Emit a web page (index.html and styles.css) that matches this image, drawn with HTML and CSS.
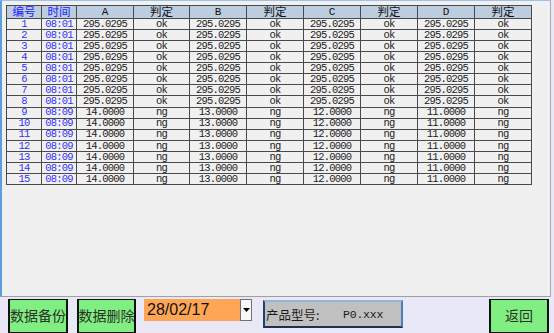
FILE: index.html
```html
<!DOCTYPE html>
<html lang="zh">
<head>
<meta charset="utf-8">
<title>数据记录</title>
<link rel="stylesheet" href="styles.css">
</head>
<body>
<div class="screen">
  <div class="panel">
    <div class="grid">
      <div class="h blue">编号</div><div class="h blue">时间</div><div class="h lat">A</div><div class="h">判定</div><div class="h lat">B</div><div class="h">判定</div><div class="h lat">C</div><div class="h">判定</div><div class="h lat">D</div><div class="h">判定</div>
      <div class="c b">1</div><div class="c b">08:01</div><div class="c">295.0295</div><div class="c">ok</div><div class="c">295.0295</div><div class="c">ok</div><div class="c">295.0295</div><div class="c">ok</div><div class="c">295.0295</div><div class="c">ok</div>
      <div class="c b">2</div><div class="c b">08:01</div><div class="c">295.0295</div><div class="c">ok</div><div class="c">295.0295</div><div class="c">ok</div><div class="c">295.0295</div><div class="c">ok</div><div class="c">295.0295</div><div class="c">ok</div>
      <div class="c b">3</div><div class="c b">08:01</div><div class="c">295.0295</div><div class="c">ok</div><div class="c">295.0295</div><div class="c">ok</div><div class="c">295.0295</div><div class="c">ok</div><div class="c">295.0295</div><div class="c">ok</div>
      <div class="c b">4</div><div class="c b">08:01</div><div class="c">295.0295</div><div class="c">ok</div><div class="c">295.0295</div><div class="c">ok</div><div class="c">295.0295</div><div class="c">ok</div><div class="c">295.0295</div><div class="c">ok</div>
      <div class="c b">5</div><div class="c b">08:01</div><div class="c">295.0295</div><div class="c">ok</div><div class="c">295.0295</div><div class="c">ok</div><div class="c">295.0295</div><div class="c">ok</div><div class="c">295.0295</div><div class="c">ok</div>
      <div class="c b">6</div><div class="c b">08:01</div><div class="c">295.0295</div><div class="c">ok</div><div class="c">295.0295</div><div class="c">ok</div><div class="c">295.0295</div><div class="c">ok</div><div class="c">295.0295</div><div class="c">ok</div>
      <div class="c b">7</div><div class="c b">08:01</div><div class="c">295.0295</div><div class="c">ok</div><div class="c">295.0295</div><div class="c">ok</div><div class="c">295.0295</div><div class="c">ok</div><div class="c">295.0295</div><div class="c">ok</div>
      <div class="c b">8</div><div class="c b">08:01</div><div class="c">295.0295</div><div class="c">ok</div><div class="c">295.0295</div><div class="c">ok</div><div class="c">295.0295</div><div class="c">ok</div><div class="c">295.0295</div><div class="c">ok</div>
      <div class="c b">9</div><div class="c b">08:09</div><div class="c">14.0000</div><div class="c">ng</div><div class="c">13.0000</div><div class="c">ng</div><div class="c">12.0000</div><div class="c">ng</div><div class="c">11.0000</div><div class="c">ng</div>
      <div class="c b">10</div><div class="c b">08:09</div><div class="c">14.0000</div><div class="c">ng</div><div class="c">13.0000</div><div class="c">ng</div><div class="c">12.0000</div><div class="c">ng</div><div class="c">11.0000</div><div class="c">ng</div>
      <div class="c b">11</div><div class="c b">08:09</div><div class="c">14.0000</div><div class="c">ng</div><div class="c">13.0000</div><div class="c">ng</div><div class="c">12.0000</div><div class="c">ng</div><div class="c">11.0000</div><div class="c">ng</div>
      <div class="c b">12</div><div class="c b">08:09</div><div class="c">14.0000</div><div class="c">ng</div><div class="c">13.0000</div><div class="c">ng</div><div class="c">12.0000</div><div class="c">ng</div><div class="c">11.0000</div><div class="c">ng</div>
      <div class="c b">13</div><div class="c b">08:09</div><div class="c">14.0000</div><div class="c">ng</div><div class="c">13.0000</div><div class="c">ng</div><div class="c">12.0000</div><div class="c">ng</div><div class="c">11.0000</div><div class="c">ng</div>
      <div class="c b">14</div><div class="c b">08:09</div><div class="c">14.0000</div><div class="c">ng</div><div class="c">13.0000</div><div class="c">ng</div><div class="c">12.0000</div><div class="c">ng</div><div class="c">11.0000</div><div class="c">ng</div>
      <div class="c b">15</div><div class="c b">08:09</div><div class="c">14.0000</div><div class="c">ng</div><div class="c">13.0000</div><div class="c">ng</div><div class="c">12.0000</div><div class="c">ng</div><div class="c">11.0000</div><div class="c">ng</div>
    </div>
  </div>
  <div class="toolbar">
    <div class="btn w60">数据备份</div>
    <div class="btn w59 ml9">数据删除</div>
    <div class="combo">
      <span class="combo-text">28/02/17</span>
      <span class="combo-arrow"><svg width="7" height="4" viewBox="0 0 7 4"><path d="M0 0H7L3.5 4Z" fill="#000"/></svg></span>
    </div>
    <div class="model"><span class="model-label">产品型号:</span><span class="model-value">P0.xxx</span></div>
    <div class="btn back">返回</div>
  </div>
</div>
</body>
</html>
```
FILE: styles.css
```css
html, body {
  margin: 0;
  padding: 0;
}
body {
  width: 554px;
  height: 333px;
  overflow: hidden;
  background: #e8e8f6;
}
.screen {
  width: 554px;
  height: 333px;
  display: flex;
  flex-direction: column;
}
.panel {
  box-sizing: border-box;
  width: 551px;
  height: 300px;
  background: #f0f0f0;
  border-top: 1px solid #9cc2ea;
  border-left: 2px solid #5c9ee0;
  border-right: 1px solid #a9a9b4;
  border-bottom: 1px solid #a0a0a0;
  padding: 4px 0 0 4px;
}
.grid {
  display: grid;
  width: 524px;
  height: 178px;
  grid-template-columns: 34px 34px 56px 55px 56px 56px 56px 56px 56px 56px;
  grid-template-rows: 12px repeat(15, minmax(0, 1fr));
  gap: 1px;
  padding: 1px;
  background: #4a4a4a;
}
.h, .c {
  display: flex;
  align-items: center;
  justify-content: center;
  white-space: nowrap;
  min-height: 0;
}
.h {
  background: #bccde0;
  font-family: "Noto Sans CJK SC", sans-serif;
  font-size: 11.5px;
  line-height: 1;
  color: #111;
}
.h.lat {
  font-family: "Liberation Mono", monospace;
  font-size: 11px;
}
.h.blue {
  color: #2020ff;
}
.c {
  background: #f0f0f0;
  font-family: "Liberation Mono", monospace;
  font-size: 10.5px;
  letter-spacing: -0.8px;
  line-height: 1;
  color: #222;
}
.c.b {
  color: #3232ff;
}
.toolbar {
  flex: 1;
  display: flex;
  align-items: flex-start;
  padding: 2px 0 0 8px;
}
.btn {
  box-sizing: border-box;
  height: 34px;
  background: #80ee80;
  border: 1px solid #111;
  border-left-width: 2px;
  border-right-width: 2px;
  font-family: "Noto Sans CJK SC", sans-serif;
  font-size: 14px;
  color: #2b332b;
  display: flex;
  justify-content: center;
  padding-top: 5px;
  white-space: nowrap;
}
.w60 { width: 60px; }
.w59 { width: 59px; }
.ml9 { margin-left: 9px; }
.combo {
  margin-left: 8px;
  width: 108px;
  height: 22px;
  display: flex;
  background: #ffa655;
}
.combo-text {
  flex: 1;
  font-family: "Liberation Sans", sans-serif;
  font-size: 16px;
  line-height: 22px;
  padding-left: 3px;
  color: #111;
}
.combo-arrow {
  box-sizing: border-box;
  width: 12px;
  height: 22px;
  background: #f8f8f8;
  border: 1px solid #707070;
  display: flex;
  align-items: center;
  justify-content: center;
}
.model {
  box-sizing: border-box;
  margin: 1px 0 0 11px;
  width: 140px;
  height: 28px;
  background: #c0c0c0;
  border: 2px solid;
  border-color: #93b4dc #4f7cb8 #1e3250 #24406a;
  display: flex;
  align-items: center;
  padding-left: 1px;
  color: #1a1a1a;
  white-space: nowrap;
}
.model-label {
  font-family: "Noto Sans CJK SC", sans-serif;
  font-size: 12.5px;
  width: 77px;
}
.model-value {
  font-family: "Liberation Mono", monospace;
  font-size: 11.5px;
  letter-spacing: -0.2px;
}
.back {
  margin-left: 86px;
  width: 60px;
}
```
